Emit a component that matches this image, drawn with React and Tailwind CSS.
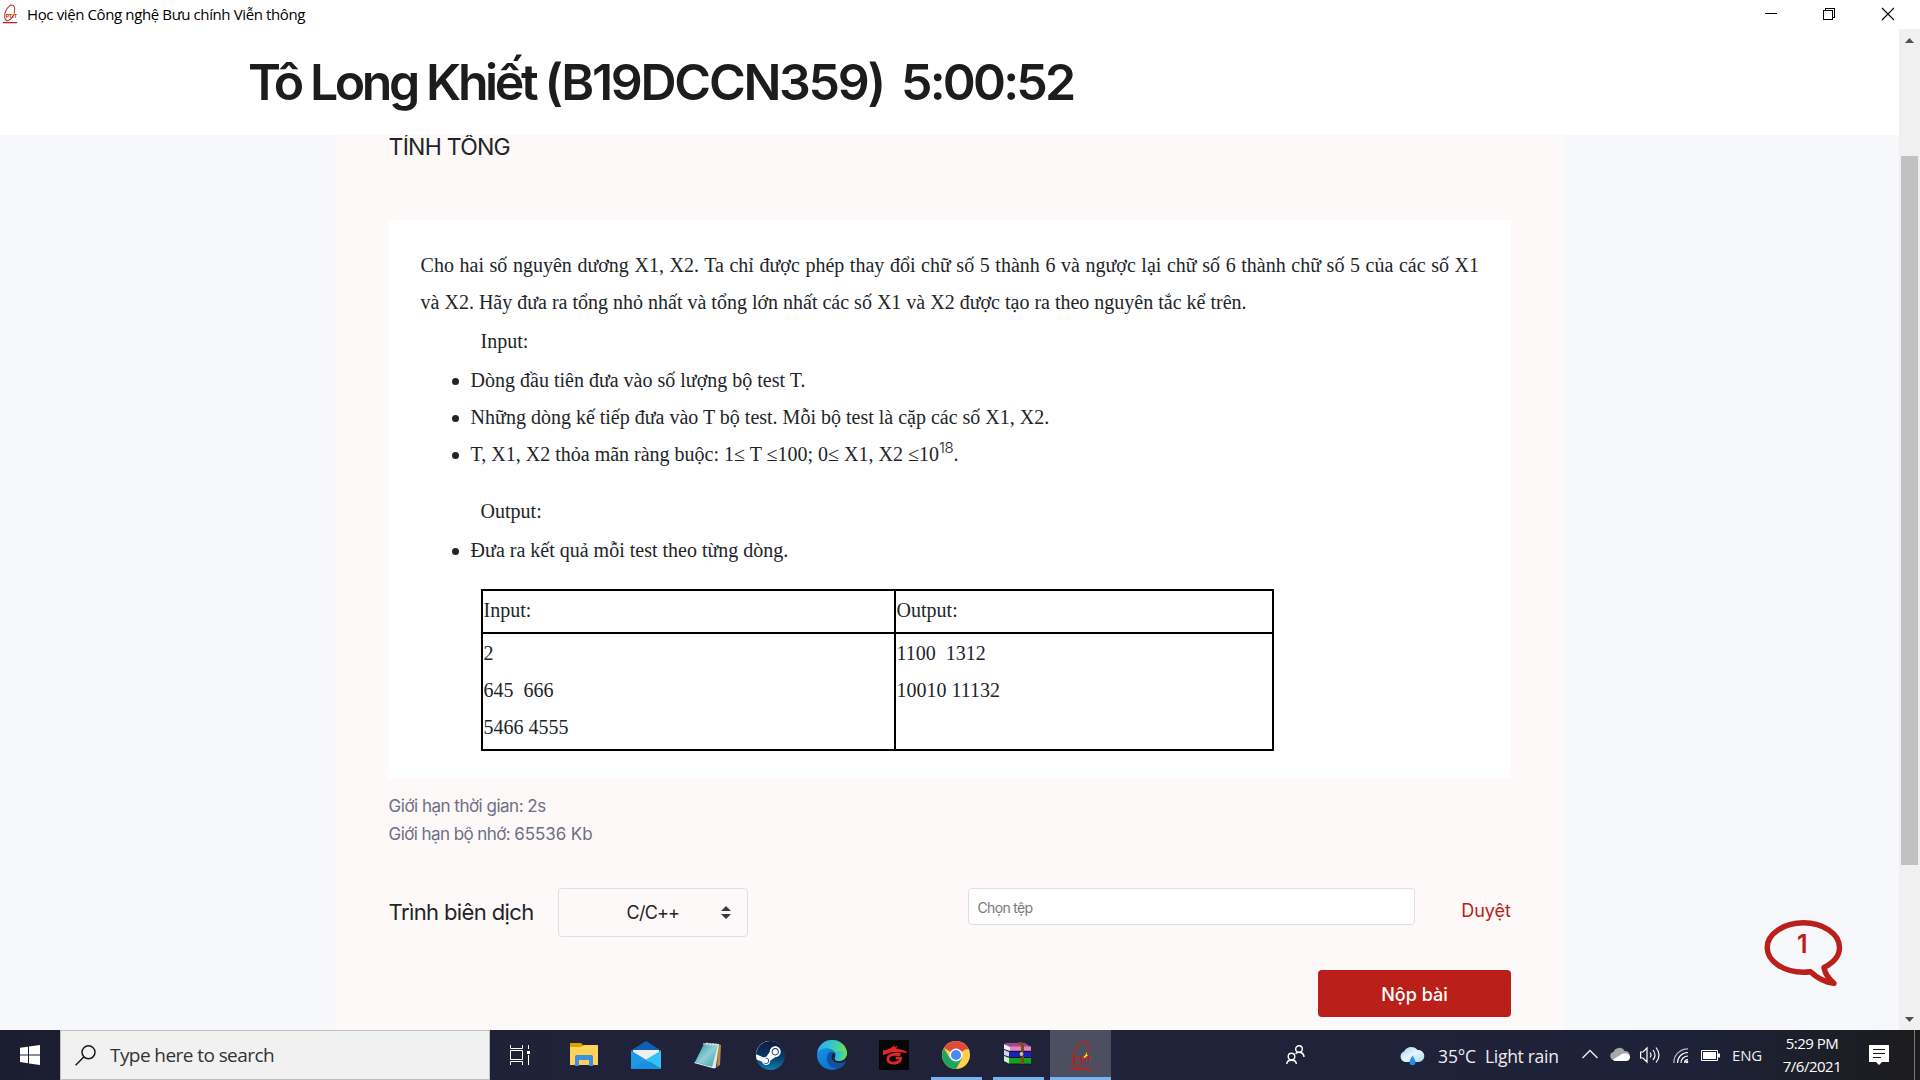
import React from "react";
import { SiSteam } from "react-icons/si";

const inter = "font-['Inter','Liberation_Sans',sans-serif]";
const serif = "font-['Liberation_Serif',serif]";
const segoe = "font-['Open_Sans','Noto_Sans',sans-serif]";

function PtitLogo({ className }) {
  return (
    <svg viewBox="0 0 24 32" className={className} fill="none">
      <ellipse cx="11.5" cy="14.2" rx="7" ry="13.2" transform="rotate(22 11.5 14.2)" stroke="#b8231f" strokeWidth="1.5" />
      <text x="5" y="22.500" fontSize="8.5" fontWeight="700" textLength="18" lengthAdjust="spacingAndGlyphs" fill="#b8231f" fontFamily="Liberation Sans">PTIT</text>
      <path d="M18 12l.2 3.200 1.300 1-2 .8-1.500 1.500-1.800-.8 2-1.700z" fill="#f3e21b" />
      <rect x="0.5" y="28.8" width="23" height="2" fill="#b8231f" />
    </svg>
  );
}

function TitleBar() {
  return (
    <header className="flex h-[29px] shrink-0 items-start bg-white">
      <PtitLogo className="ml-[2px] mt-1 h-5 w-[16px]" />
      <span className={`ml-[9px] mt-[4px] text-[15px] leading-[21px] tracking-[-0.38px] whitespace-nowrap text-black ${segoe}`}>Học viện Công nghệ Bưu chính Viễn thông</span>
      <svg className="ml-auto mr-[26px] h-[29px] w-[129px]" viewBox="0 0 129 29" fill="none" stroke="#000" shapeRendering="crispEdges">
        <path d="M0 13.5h12" />
        <path d="M58.5 10.5h9v9h-9zM60.5 10.5v-2h9v9h-2" />
        <path d="M117 8l12 12M129 8l-12 12" shapeRendering="auto" strokeWidth="1.2" />
      </svg>
    </header>
  );
}

function Scrollbar() {
  return (
    <div className="flex w-[21px] shrink-0 flex-col items-center bg-[#f0f0f0]">
      <svg className="mt-[9px] h-[5px] w-[9px]" viewBox="0 0 9 5"><path d="M0 5L4.5 0 9 5z" fill="#505050" /></svg>
      <div className="mt-[113px] h-[709px] w-[17px] bg-[#c1c1c1]" />
      <svg className="mt-auto mb-[8px] h-[5px] w-[9px]" viewBox="0 0 9 5"><path d="M0 0L4.5 5 9 0z" fill="#505050" /></svg>
    </div>
  );
}

const statement =
  "Cho hai số nguyên dương X1, X2. Ta chỉ được phép thay đổi chữ số 5 thành 6 và ngược lại chữ số 6 thành chữ số 5 của các số X1";

const testItems = [
  "Dòng đầu tiên đưa vào số lượng bộ test T.",
  "Những dòng kế tiếp đưa vào T bộ test. Mỗi bộ test là cặp các số X1, X2.",
];

function Bullet({ children }) {
  return (
    <li className="flex h-[37px] items-start">
      <span className="ml-[31px] mt-[16px] mr-[12px] size-[7px] rounded-full bg-[#212529]" />
      <span className="whitespace-nowrap">{children}</span>
    </li>
  );
}

function Problem() {
  return (
    <article className={`mt-[59px] h-[558px] shrink-0 bg-white px-8 pt-[27px] text-[20px] leading-[37px] text-[#212529] ${serif}`}>
      <p className="h-[37px] whitespace-nowrap [text-align-last:justify]">{statement}</p>
      <p className="h-[37px] whitespace-nowrap">và X2. Hãy đưa ra tổng nhỏ nhất và tổng lớn nhất các số X1 và X2 được tạo ra theo nguyên tắc kể trên.</p>
      <p className="mt-[2px] ml-[60px] h-[37px]">Input:</p>
      <ul className="mt-[2px]">
        {testItems.map((t) => <Bullet key={t}>{t}</Bullet>)}
        <Bullet>
          T, X1, X2 thỏa mãn ràng buộc: 1≤ T ≤100; 0≤ X1, X2 ≤10
          <sup className={`relative top-[-8px] align-baseline text-[15px] leading-none font-[350] tracking-[-0.2px] ${inter}`}>18</sup>.
        </Bullet>
      </ul>
      <p className="mt-[20px] ml-[60px] h-[37px]">Output:</p>
      <ul className="mt-[2px]"><Bullet>Đưa ra kết quả mỗi test theo từng dòng.</Bullet></ul>
      <div className="mt-[20px] ml-[60px] grid h-[162px] w-[793px] grid-cols-[411px_376px] grid-rows-[41px_115px] gap-[2px] border-2 border-black bg-black [&>div]:bg-white [&>div]:whitespace-pre">
        <div className="pl-px pt-px">Input:</div>
        <div className="pl-px pt-px">Output:</div>
        <div className="pl-px pt-px"><p>2</p><p>{"645  666"}</p><p>5466 4555</p></div>
        <div className="pl-px pt-px"><p>{"1100  1312"}</p><p>10010 11132</p></div>
      </div>
    </article>
  );
}

function SubmitForm() {
  return (
    <>
      <div className="mt-[14px] text-[17px] leading-7 text-[#6b7085]">
        <p className="tracking-[-0.5px]">Giới hạn thời gian: 2s</p>
        <p><span className="tracking-[-0.58px]">Giới hạn bộ nhớ: </span><span className="tracking-[-0.08px]">65536 Kb</span></p>
      </div>
      <div className="mt-[40px] flex h-[49px] items-start">
        <span className="mt-[10px] w-[169px] shrink-0 text-[22px] leading-7 tracking-[-0.62px] whitespace-nowrap text-[#212529]">Trình biên dịch</span>
        <div className="flex h-[49px] w-[190px] shrink-0 items-center rounded border border-[#dcdfe6]">
          <span className="mt-px ml-[68px] text-[18px] leading-6 tracking-[-0.8px] text-[#212529]">C/C++</span>
          <svg className="ml-auto mr-[16px] h-[13px] w-[10px]" viewBox="0 0 10 13"><path d="M0 5L5 0l5 5zM0 8l5 5 5-5z" fill="#343a40" /></svg>
        </div>
        <div className="ml-[220px] flex h-[37px] w-[447px] shrink-0 items-center rounded border border-[#dcdfe6] bg-white">
          <span className="ml-[9px] mt-[2px] text-[14px] leading-5 tracking-[-0.7px] text-[#777]">Chọn tệp</span>
        </div>
        <span className="mt-[11px] ml-auto text-[18px] leading-6 text-[#ba2019]">Duyệt</span>
      </div>
      <div className="mt-[33px] ml-auto flex h-[47px] w-[193px] shrink-0 items-center justify-center rounded bg-[#ba2019]">
        <span className="mt-[3px] text-[18px] leading-6 font-medium text-white">Nộp bài</span>
      </div>
    </>
  );
}

function ChatBubble() {
  return (
    <div className="absolute top-[891px] left-[1764px] h-[68px] w-[79px]">
      <svg viewBox="0 0 79 68" className="h-full w-full" fill="none">
        <path d="M60 47.5C69 43 75.5 36 75.500 27.500C75.500 13.800 59 2.800 39.500 2.800S3.200 13.800 3.200 27.500S19.500 52.200 39.500 52.200c2.300 0 4.500-.2 7-.5C53 58 60 62 70 63.300C65 59 61 54 60 47.500z" stroke="#ba2019" strokeWidth="5.400" strokeLinejoin="round" />
      </svg>
      <span className="absolute top-[8px] left-[33px] text-[25px] leading-8 font-semibold text-[#ba2019]">1</span>
    </div>
  );
}

function Cell({ children, className }) {
  return <div className={`flex h-full shrink-0 items-center justify-center ${className}`}>{children}</div>;
}

const FolderIcon = () => (
  <svg className="h-[30px] w-[30px]" viewBox="0 0 30 30">
    <path d="M1 3h11l3 3h10v6H1z" fill="#e0a100" /><path d="M1 7h11l3-2h14v20H1z" fill="#ffd35a" />
    <path d="M6 26V17q0-2 2-2h14q2 0 2 2v9h-4v-6H10v6z" fill="#3c8fdc" />
  </svg>
);
const MailIcon = () => (
  <svg className="h-[30px] w-[30px]" viewBox="0 0 30 30">
    <path d="M0 10.500L15 1l15 9.500V14H0z" fill="#0f5fb4" /><path d="M2 10h26v8L15 24 2 18z" fill="#efefef" />
    <path d="M0 10.500L30 29H0z" fill="#1f98e6" /><path d="M30 10.500L15 19.500 30 29z" fill="#35c1f7" /><path d="M15 19.700L0 29h30z" fill="#1a8fe0" />
  </svg>
);
const NotepadIcon = () => (
  <svg className="h-[30px] w-[30px]" viewBox="0 0 30 30">
    <defs><linearGradient id="np" x1="0" y1="0" x2="1" y2="1"><stop offset="0" stopColor="#2f8d9e" /><stop offset=".5" stopColor="#8fcfd9" /><stop offset="1" stopColor="#3b9aab" /></linearGradient></defs>
    <path d="M25 4l3 1-1 20-3 2z" fill="#b98a3c" /><path d="M12 3l14 1-3 23-7 0z" fill="#dfe8ea" />
    <path d="M11 4l14 1-6 22L2 22z" fill="url(#np)" /><path d="M2 22l17 5 5 0-3 1.500L1 23z" fill="#e6f0f2" />
    <path d="M11 3v2M14 2.500v3M17 3v3M20 3v3M23 3.500v3" stroke="#d5dadd" strokeWidth="1.200" />
  </svg>
);
const SteamIcon = () => (
  <span className="grid size-[28px] place-items-center rounded-full bg-white">
    <svg width="0" height="0" className="absolute"><linearGradient id="st" x1="0" y1="0" x2="0" y2="1"><stop offset="0" stopColor="#10183c" /><stop offset=".55" stopColor="#0b3b6b" /><stop offset="1" stopColor="#0f7fb3" /></linearGradient></svg>
    <SiSteam className="size-[29px] fill-[url(#st)]" />
  </span>
);
const EdgeIcon = () => (
  <svg className="size-[30px]" viewBox="0 0 30 30">
    <defs>
      <linearGradient id="eg" x1="0" y1="0" x2="1" y2=".3"><stop offset="0" stopColor="#2fa8ea" /><stop offset=".5" stopColor="#33c6cf" /><stop offset="1" stopColor="#6be04b" /></linearGradient>
      <linearGradient id="eb" x1="0" y1="0" x2=".6" y2="1"><stop offset="0" stopColor="#1a9be6" /><stop offset="1" stopColor="#0a6fce" /></linearGradient>
    </defs>
    <circle cx="15" cy="15" r="15" fill="url(#eb)" />
    <path d="M.3 12C2 4.500 8 0 15 0c9 0 15 6.500 15 13 0 5-4 8-8 8-3 0-5-1.500-4-3 2-3 .5-7-3-8.500C10 7.500 4 8 .3 12z" fill="url(#eg)" />
    <path d="M11 14c-3 5 0 12 6 14 4 1.200 8.500 0 11-4.500 1-1.500 0-2-1-1.300-5 2.800-12 0-12.500-6.200 0-2 1-3.500 2-4-2-.5-4.500 0-5.500 2z" fill="#10529f" />
    <path d="M17 12.500c-1.500.5-2.500 2-2.500 4 0 3.500 2.800 6 6.500 6.500 3 .2 5-.3 7-1.500 1-.7 1.800 0 1 1.300l1 2V14c-1 4.500-4 7-8 7-3 0-5-1.500-4-3 1.200-2 .8-4-1-5.500z" fill="#1f2338" />
    <path d="M18 18c-1 1.500 1 3 4 3 4 0 8-3 8-8l0-1-5-1-6 1z" fill="url(#eg)" />
  </svg>
);
const GarenaIcon = () => (
  <svg className="size-[30px]" viewBox="0 0 30 30">
    <rect width="30" height="30" rx="1.500" fill="#060606" />
    <path d="M4 10.500c5-1 9-2.500 12-6l-1 3 4-2-2 3 8.500 2 3.500 2.500-7.500-.8c-7-.8-12 .5-17.500 3z" fill="#e0252b" />
    <path d="M21 15c-2-.6-4-.8-6-.6M21.500 14.300c-8-1-12.700 1.200-12.700 5 0 3.500 5 4.600 9.200 3.300 2.500-.8 3.500-2.600 3.700-4.600h-5" fill="none" stroke="#e0252b" strokeWidth="2.700" />
  </svg>
);
const ChromeIcon = () => (
  <svg className="size-[28px]" viewBox="0 0 28 28">
    <circle cx="14" cy="14" r="14" fill="#ffd04a" />
    <path d="M14 14L1.900 7A14 14 0 0 1 26.100 7z" fill="#dd4b3e" /><path d="M1.900 7A14 14 0 0 0 14 28l6-10.500L14 14 8 17.500z" fill="#1da362" />
    <path d="M14 7.500h12.400" stroke="#dd4b3e" strokeWidth="1.500" />
    <circle cx="14" cy="14" r="6.500" fill="#fff" /><circle cx="14" cy="14" r="5.100" fill="#4a8af4" />
  </svg>
);
const WinrarIcon = () => (
  <svg className="h-[24px] w-[28px]" viewBox="0 0 28 24">
    <path d="M1 1h20l6 4v4H6z" fill="#a5478b" /><path d="M6 4.500h21v4H6z" fill="#d989c2" /><path d="M0 2l6 3v4L0 7z" fill="#eee" />
    <path d="M0 8l6 2h21v5H6L0 13z" fill="#1b1fc4" /><path d="M0 8l5 2v4.500L0 13z" fill="#d5d5e8" />
    <path d="M0 14l6 2h21v6H6L0 19z" fill="#13a31b" /><path d="M0 14l5 2v5.500L0 19z" fill="#d7ead8" />
    <path d="M6 9.500h21M6 15.500h21M6 22h20" stroke="#111" strokeWidth=".8" />
    <path d="M14 0l3 4v18h3V4l-2-4z" fill="#7a4a21" /><circle cx="17.500" cy="12" r="2.500" fill="#c9c2ae" stroke="#222" />
  </svg>
);

function Taskbar() {
  return (
    <footer className={`flex h-[50px] shrink-0 items-stretch overflow-hidden bg-[linear-gradient(90deg,#1b1d30_0%,#1f2238_30%,#1f2239_70%,#1e2238_88%,#1c1e26_96%,#1c1c1e_100%)] text-white ${segoe}`}>
      <Cell className="w-[60px]">
        <svg className="size-5" viewBox="0 0 20 20" fill="#fff"><path d="M0 2.800l8-1.100v7.700H0zM9 1.500L20 0v9.400H9zM0 10.400h8v7.800l-8-1.100zM9 10.400h11V20L9 18.400z" /></svg>
      </Cell>
      <div className="flex w-[430px] shrink-0 items-center border border-[#bfbfbf] bg-[#f1f1f1]">
        <svg className="ml-[14px] size-[21px]" viewBox="0 0 21 21" fill="none" stroke="#1a1a1a" strokeWidth="1.500"><circle cx="13.500" cy="7.300" r="6.500" /><path d="M8.800 12L.6 20.300" /></svg>
        <span className="ml-[14px] text-[19px] leading-6 tracking-[-0.57px] text-[#333]">Type here to search</span>
      </div>
      <Cell className="w-[60px]">
        <svg className="h-[20px] w-[21px]" viewBox="0 0 21 20" fill="none" stroke="#fff"><path d="M.5 0v3.500h12V0M.5 5.500h12v9H.5zM.5 20v-3.500h12V20M18.500 0v4M18.500 10v10" /><path d="M17 6h3v3h-3z" fill="#fff" stroke="none" /></svg>
      </Cell>
      <Cell className="w-[68px]"><FolderIcon /></Cell>
      <Cell className="w-[56px]"><MailIcon /></Cell>
      <Cell className="w-[68px]"><NotepadIcon /></Cell>
      <Cell className="w-[56px]"><SteamIcon /></Cell>
      <Cell className="w-[68px]"><EdgeIcon /></Cell>
      <Cell className="w-[56px]"><GarenaIcon /></Cell>
      <Cell className="ml-[9px] w-[51px] border-b-[3px] border-[#76b4f0] pt-[3px] pr-px"><ChromeIcon /></Cell>
      <Cell className="ml-[11px] w-[51px] border-b-[3px] border-[#76b4f0] pr-px"><WinrarIcon /></Cell>
      <Cell className="ml-[6px] w-[61px] border-b-[3px] border-[#76b4f0] bg-[#4c4f60] pt-[3px]"><PtitLogo className="h-[31px] w-[24px]" /></Cell>
      <svg className="mt-[15px] ml-[175px] h-[20px] w-[19px] shrink-0" viewBox="0 0 19 20" fill="none" stroke="#fff" strokeWidth="1.400"><circle cx="13" cy="4" r="3.300" /><circle cx="5.500" cy="11.500" r="3.300" /><path d="M.8 19c0-5 9.500-5 9.500 0M9.500 8.800c3-3 8.500-1.500 8.500 3.200" /></svg>
      <svg className="mt-[15px] ml-[94px] h-[21px] w-[26px] shrink-0" viewBox="0 0 26 21">
        <defs><linearGradient id="wc" x1="0" y1="0" x2="1" y2="1"><stop offset="0" stopColor="#9fd0f5" /><stop offset=".5" stopColor="#e6f4fd" /><stop offset="1" stopColor="#a9d5f5" /></linearGradient></defs>
        <path d="M6 17a5.500 5.500 0 0 1-1-10.500A8 8 0 0 1 18.500 5 6 6 0 1 1 20 17z" fill="url(#wc)" /><path d="M13.500 10.500c2 3.500 3 5 3 6.700a3 3 0 0 1-6 0c0-1.700 1-3.200 3-6.700z" fill="#2b8ae6" />
      </svg>
      <span className="mt-[14px] ml-[13px] w-[47px] shrink-0 text-[17.500px] leading-6 tracking-[-0.13px] text-[#eee]">35°C</span>
      <span className="mt-[14px] w-[97px] shrink-0 text-[17.500px] leading-6 tracking-[-0.3px] whitespace-nowrap text-[#eee]">Light rain</span>
      <svg className="mt-[19px] h-[10px] w-[16px] shrink-0" viewBox="0 0 16 10" fill="none" stroke="#eee" strokeWidth="1.400"><path d="M.5 9L8 1.500 15.500 9" /></svg>
      <svg className="mt-[17px] ml-[12px] h-[14px] w-[20px] shrink-0" viewBox="0 0 20 14"><path d="M4 13a4 4 0 0 1-.5-7.900A6 6 0 0 1 14.500 4 4.500 4.500 0 0 1 16 13z" fill="#a7a7ab" /><path d="M3 12.500L12 7c4-2 8 .500 8 3s-1.500 4-4 4H5q-1.500 0-2-1.500z" fill="#fff" /></svg>
      <svg className="mt-[16px] ml-[10px] h-[18px] w-[21px] shrink-0" viewBox="0 0 21 18" fill="none" stroke="#fff" strokeWidth="1.200"><path d="M.6 6H3l4-4v14l-4-4H.6zM10 6.500q2 2.500 0 5M13 4q4 5 0 10M16 1.500q6 7.500 0 15" /></svg>
      <svg className="mt-[18px] ml-[12px] h-[16px] w-[16px] shrink-0" viewBox="0 0 16 16" fill="none" stroke="#fff" strokeWidth="1.200"><path d="M15 .8C7 .8 .8 7 .8 15" opacity=".7" /><path d="M15 4.500C9 4.500 4.500 9 4.500 15M15 8c-4 0-7 3-7 7" /><path d="M15 11.500c-2 0-3.500 1.500-3.500 3.500" /><circle cx="13.800" cy="13.800" r="1.500" fill="#fff" stroke="none" /></svg>
      <svg className="mt-[20px] ml-[12px] h-[11px] w-[19px] shrink-0" viewBox="0 0 19 11" fill="none" stroke="#fff"><path d="M.5 .5h16v10H.5z" /><path d="M2 2h13v7H2zM17 3.500h2v4h-2z" fill="#fff" stroke="none" /></svg>
      <span className="mt-[15px] ml-[12px] w-[46px] shrink-0 text-[15px] leading-5 tracking-[-0.2px] text-[#eee]">ENG</span>
      <div className="mt-[2px] ml-px flex w-[66px] shrink-0 flex-col items-center text-[15px] leading-[22.5px] tracking-[-0.5px] whitespace-nowrap">
        <span>5:29 PM</span><span>7/6/2021</span>
      </div>
      <svg className="mt-[15px] ml-[24px] h-[20px] w-[20px] shrink-0" viewBox="0 0 20 20"><path d="M0 0h20v17h-7l-3 3-3-3H0z" fill="#fff" /><path d="M4 4.500h12M4 8.500h12M4 12.500h8" stroke="#1c1c1e" strokeWidth="1.200" /></svg>
      <div className="ml-auto mr-[5px] w-px bg-[#77777a]" />
    </footer>
  );
}

export default function App() {
  return (
    <div className={`flex h-[1080px] w-[1920px] flex-col overflow-hidden bg-white ${inter}`}>
      <TitleBar />
      <div className="flex min-h-0 flex-1">
        <main className="relative flex w-[1899px] flex-col">
          <div className="flex h-[106px] shrink-0 items-start pt-[23px] pl-[248px] text-[50px] leading-[60px] font-[560] whitespace-nowrap text-[#1b1c1e]">
            <span className="w-[653px]">
              <span className="tracking-[-3.4px]">Tô Long Khiết </span>
              <span className="tracking-[-2.3px]">(B19DCCN359)</span>
            </span>
            <span className="tracking-[-2.8px]">5:00:52</span>
          </div>
          <div className="flex min-h-0 flex-1 overflow-hidden bg-[#f6f8fb] pl-[335px]">
            <section className="flex w-[1230px] flex-col bg-[#fdf9f8] pr-[54px] pl-[53.6px]">
              <h2 className="-mt-[2px] h-7 shrink-0 text-[23px] leading-7 tracking-[-0.75px] text-[#212529]">TÍNH TỔNG</h2>
              <Problem />
              <SubmitForm />
            </section>
          </div>
          <ChatBubble />
        </main>
        <Scrollbar />
      </div>
      <Taskbar />
    </div>
  );
}
